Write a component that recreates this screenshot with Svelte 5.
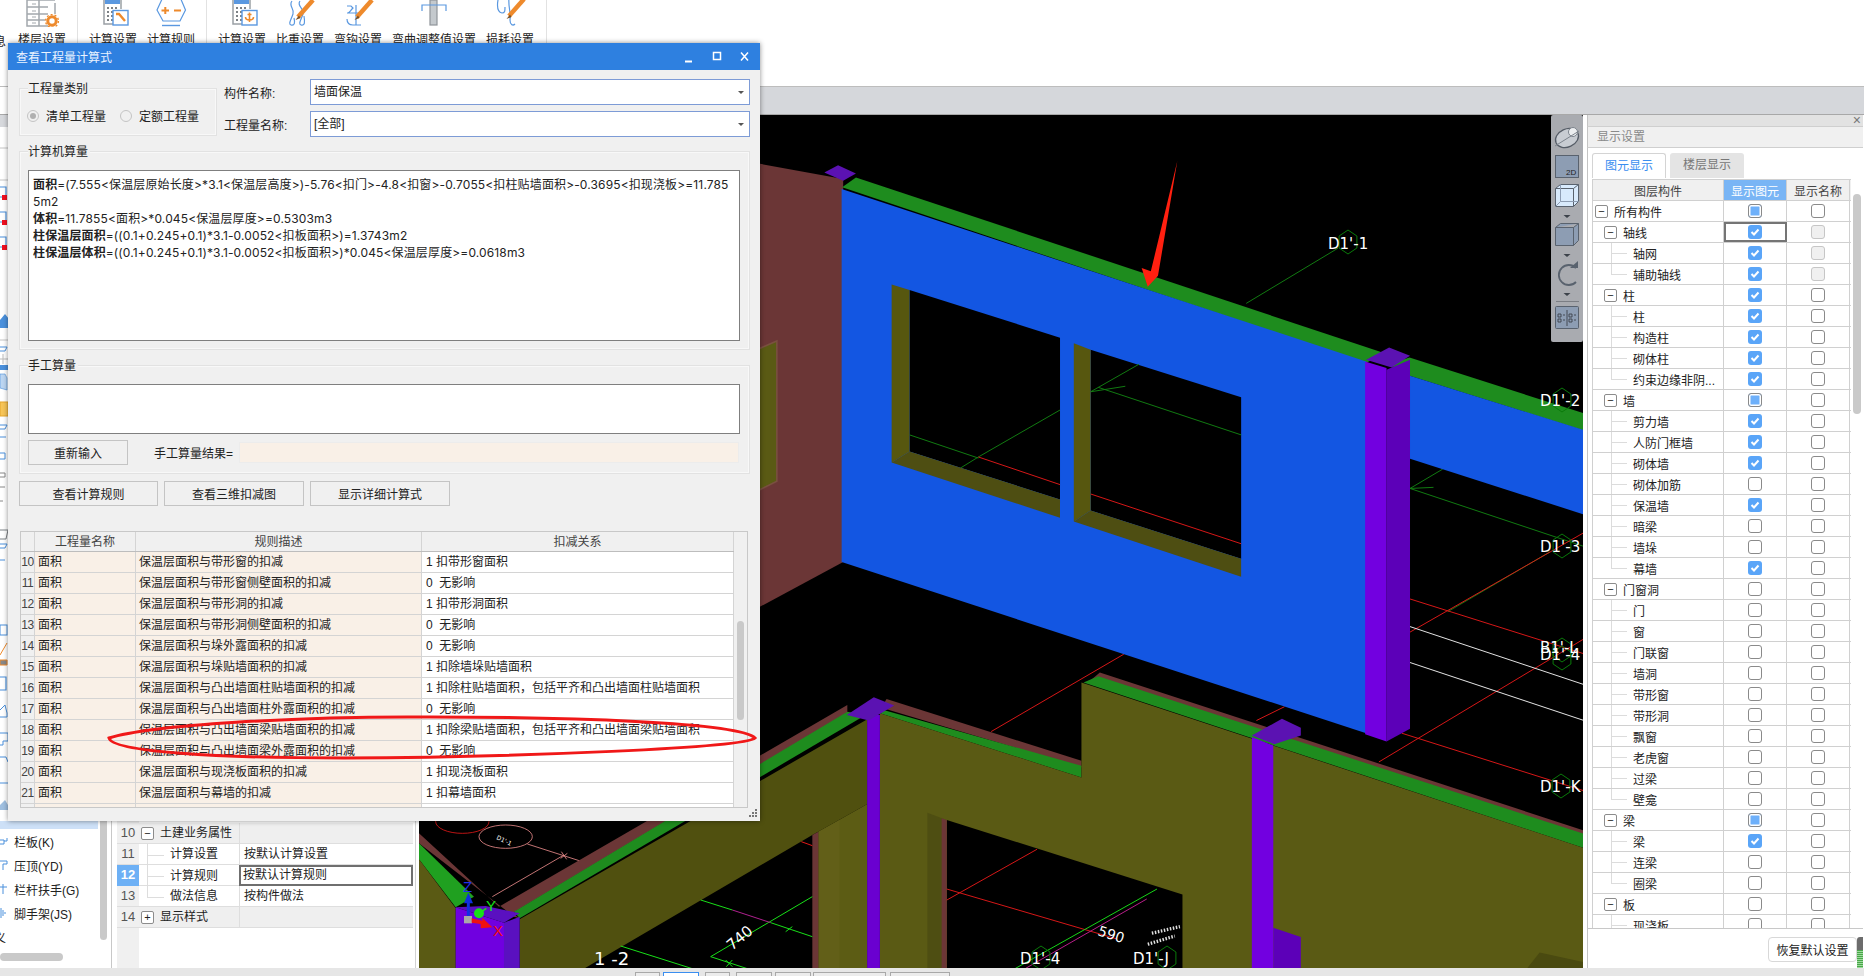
<script>
  const ribbon = [
    { items: [{ label: "楼层设置", icon: "floor" }], pad: 13, end: 6 },
    { items: [{ label: "计算设置", icon: "calcWrench" }, { label: "计算规则", icon: "hex" }], pad: 6, end: 6 },
    {
      items: [
        { label: "计算设置", icon: "calcAnchor" },
        { label: "比重设置", icon: "hooks" },
        { label: "弯钩设置", icon: "bend" },
        { label: "弯曲调整值设置", icon: "post", wide: true },
        { label: "损耗设置", icon: "loss" },
      ],
      pad: 6,
      end: 7,
    },
  ];

  const navItems = ["栏板(K)", "压顶(YD)", "栏杆扶手(G)", "脚手架(JS)"];

  const props = [
    { n: 10, name: "土建业务属性", value: "", head: "minus" },
    { n: 11, name: "计算设置", value: "按默认计算设置" },
    { n: 12, name: "计算规则", value: "按默认计算规则", active: true },
    { n: 13, name: "做法信息", value: "按构件做法", last: true },
    { n: 14, name: "显示样式", value: "", head: "plus" },
  ];

  const rules = [
    [10, "保温层面积与带形窗的扣减", "1 扣带形窗面积"],
    [11, "保温层面积与带形窗侧壁面积的扣减", "0  无影响"],
    [12, "保温层面积与带形洞的扣减", "1 扣带形洞面积"],
    [13, "保温层面积与带形洞侧壁面积的扣减", "0  无影响"],
    [14, "保温层面积与垛外露面积的扣减", "0  无影响"],
    [15, "保温层面积与垛贴墙面积的扣减", "1 扣除墙垛贴墙面积"],
    [16, "保温层面积与凸出墙面柱贴墙面积的扣减", "1 扣除柱贴墙面积，包括平齐和凸出墙面柱贴墙面积"],
    [17, "保温层面积与凸出墙面柱外露面积的扣减", "0  无影响"],
    [18, "保温层面积与凸出墙面梁贴墙面积的扣减", "1 扣除梁贴墙面积，包括平齐和凸出墙面梁贴墙面积"],
    [19, "保温层面积与凸出墙面梁外露面积的扣减", "0  无影响"],
    [20, "保温层面积与现浇板面积的扣减", "1 扣现浇板面积"],
    [21, "保温层面积与幕墙的扣减", "1 扣幕墙面积"],
    [22, "保温层面积与栏板的扣减", "1 扣栏板面积"],
  ];

  // label, level, shown state, name state
  const tree = [
    ["所有构件", 0, "p", "n"],
    ["轴线", 1, "c", "d", "sel"],
    ["轴网", 2, "c", "d"],
    ["辅助轴线", 2, "c", "d", "last"],
    ["柱", 1, "c", "n"],
    ["柱", 2, "c", "n"],
    ["构造柱", 2, "c", "n"],
    ["砌体柱", 2, "c", "n"],
    ["约束边缘非阴...", 2, "c", "n", "last"],
    ["墙", 1, "p", "n"],
    ["剪力墙", 2, "c", "n"],
    ["人防门框墙", 2, "c", "n"],
    ["砌体墙", 2, "c", "n"],
    ["砌体加筋", 2, "n", "n"],
    ["保温墙", 2, "c", "n"],
    ["暗梁", 2, "n", "n"],
    ["墙垛", 2, "n", "n"],
    ["幕墙", 2, "c", "n", "last"],
    ["门窗洞", 1, "n", "n"],
    ["门", 2, "n", "n"],
    ["窗", 2, "n", "n"],
    ["门联窗", 2, "n", "n"],
    ["墙洞", 2, "n", "n"],
    ["带形窗", 2, "n", "n"],
    ["带形洞", 2, "n", "n"],
    ["飘窗", 2, "n", "n"],
    ["老虎窗", 2, "n", "n"],
    ["过梁", 2, "n", "n"],
    ["壁龛", 2, "n", "n", "last"],
    ["梁", 1, "p", "n"],
    ["梁", 2, "c", "n"],
    ["连梁", 2, "n", "n"],
    ["圈梁", 2, "n", "n", "last"],
    ["板", 1, "n", "n"],
    ["现浇板", 2, "n", "n"],
  ];

  const statusTabs = [
    [635, 25], [663, 36, true], [705, 25], [736, 36], [775, 36], [813, 73], [890, 60],
  ];

  // pointy hexagon for the axis bubbles
  const hex = (cx, cy, r = 12) =>
    [0, 1, 2, 3, 4, 5]
      .map((i) => {
        const a = (Math.PI / 3) * i - Math.PI / 2;
        return `${(cx + r * 0.86 * Math.cos(a)).toFixed(1)},${(cy + r * Math.sin(a)).toFixed(1)}`;
      })
      .join(" ");

  const bubbles = [[1349, 242], [1563, 400], [1563, 546], [1563, 650], [1563, 658], [1562, 786], [1042, 958], [1168, 958]];
</script>

<div class="app">
  <header class="ribbon">
    <span class="cut-label">息</span>
    {#each ribbon as group}
      <div class="rgroup" style="padding-left:{group.pad}px;padding-right:{group.end}px">
        {#each group.items as item}
          <div class="ritem" class:wide={item.wide}>
            <svg class="ricon" viewBox="0 0 48 27" width="48" height="27" fill="none">
              {#if item.icon === "floor"}
                <path d="M9 0V26H30M37 3V14M9 0H37M9 7H30M9 14H30M9 20H27M21 0V26" stroke="#a3a8ad" stroke-width="1.5" />
                <path d="M14 4H18M14 11H18M14 17H18M14 23H18" stroke="#a3a8ad" />
                <circle cx="34" cy="21" r="4.2" stroke="#ee8a2c" stroke-width="3" />
                <circle cx="34" cy="21" r="6.4" stroke="#ee8a2c" stroke-dasharray="2 2" stroke-width="1.4" />
              {:else if item.icon === "calcWrench" || item.icon === "calcAnchor"}
                <path d="M15 0V24H24" stroke="#9aa0a5" stroke-width="1.5" />
                <path d="M32 0V9" stroke="#9aa0a5" stroke-width="1.5" />
                <rect x="16" y="0" width="15" height="4" fill="#5a98e0" />
                <path d="M18 8H20M22 8H24M26 8H28M18 12H20M22 12H24M18 16H20M22 16H24M18 20H20M22 20H24" stroke="#7d8286" stroke-width="2" />
                <rect x="24" y="10.5" width="15" height="14.5" fill="#fff" stroke="#5a98e0" stroke-width="1.4" />
                {#if item.icon === "calcWrench"}
                  <path d="M27 14L30 14L36 21" stroke="#ee8a2c" stroke-width="2.4" />
                {:else}
                  <path d="M31.500 12.500V22M27.500 17C27.500 21 35.500 21 35.500 17M29.500 14.500H33.500" stroke="#ee8a2c" stroke-width="1.6" />
                {/if}
              {:else if item.icon === "hex"}
                <path d="M16 -3L10 10L16 21H33L38.500 10L33 -3" stroke="#5a98e0" stroke-width="1.2" />
                <path d="M15 25.500H33" stroke="#5a98e0" stroke-width="1.4" />
                <path d="M14.500 10.500H22M18.300 7V14M27 10.500H34" stroke="#ee8a2c" stroke-width="2" />
              {:else if item.icon === "hooks"}
                <path d="M16 1C12 6 19 9 17 14C15 20 12 24 15 25C19 26 19 22 18 18M24 1C20 6 29 9 27 14C25 20 22 24 25 25C29 26 29 22 28 16" stroke="#5a98e0" stroke-width="1.2" />
                <path d="M22 17L37 0" stroke="#ee8a2c" stroke-width="4.500" />
                <path d="M23 15.500L19.500 20L24.500 18Z" fill="#7a5024" />
              {:else if item.icon === "bend"}
                <path d="M13 6H17L19 8C16 11 16 12 14 13M13 13H27M13 19C13 24 16 25 19 25H27M22 5V25" stroke="#5a98e0" stroke-width="1.2" />
                <path d="M23 17L38 0" stroke="#ee8a2c" stroke-width="4.500" />
                <path d="M24 15.500L20.500 20L25.500 18Z" fill="#7a5024" />
              {:else if item.icon === "post"}
                <rect x="20" y="0" width="7" height="25" fill="#c4c9cd" stroke="#8f9499" stroke-width="1.2" />
                <path d="M12 11V5H36V11" stroke="#5a98e0" stroke-width="1.2" />
              {:else if item.icon === "loss"}
                <path d="M12 0C11 6 11 12 16 13C19 13 19 11 19 7M23 -2C22 6 25 12 24 20C24 25 27 26 29 24" stroke="#5a98e0" stroke-width="1.2" />
                <path d="M23 16L38 -1" stroke="#ee8a2c" stroke-width="4.500" />
                <path d="M24 14.500L20.500 19L25.500 17Z" fill="#7a5024" />
              {/if}
            </svg>
            <span>{item.label}</span>
          </div>
        {/each}
      </div>
    {/each}
  </header>

  <div class="band"><div class="band-left"></div></div>

  <div class="main">
    <aside class="nav">
      <svg class="edge" width="9" height="706" viewBox="0 0 9 706" fill="none">
        <rect width="9" height="12" fill="#d6d8dc" />
        <path d="M0 33H9M0 65H9M0 225H9" stroke="#c4c4c4" />
        {#each [80, 105, 130] as y}
          <path d="M0 {y - 8}H6V{y + 2}H0" stroke="#4a90dc" stroke-width="1.200" />
          <rect x="2" y={y} width="5" height="5" fill="#f01020" />
        {/each}
        <path d="M0 205L5 199L9 204V213H0Z" fill="#4a90dc" />
        <path d="M0 232H7L5 236H0" stroke="#4a90dc" />
        <rect y="250" width="9" height="5" fill="#4a90dc" />
        <path d="M0 244H9M3 239V249" stroke="#bbb" />
        <path d="M0 259H5L7 263V275L0 273Z" fill="#bcd6f2" stroke="#4a90dc" stroke-width=".6" />
        <rect y="287" width="8" height="14" fill="#f7c558" stroke="#e5a62c" />
        <path d="M0 310H7L5 314H0M0 322H6M0 338H5V344H0" stroke="#4a90dc" />
        <path d="M0 358H5V362H0M0 372H5M0 386H3" stroke="#888" />
        <path d="M0 415H8L6 424H0" stroke="#7d8286" />
        <path d="M0 429H7L5 433H0M0 445H5" stroke="#4a90dc" />
        <rect y="510" width="7" height="10" stroke="#4a90dc" />
        <path d="M0 540L7 528M0 545H7V550H0Z" fill="#888" stroke="#ee8a2c" />
        <path d="M0 562H6V575H0" stroke="#4a90dc" stroke-width="1.200" />
        <path d="M0 595L5 590L7 598V602H0" stroke="#4a90dc" />
        <path d="M0 618H8V626H3V630H0" stroke="#4a90dc" />
        <path d="M0 642H6L8 647M0 668H8" stroke="#4a90dc" />
        <path d="M0 690L5 685L8 690V695H0Z" fill="#9fbfe0" />
      </svg>
      <div class="nav-active"></div>
      {#each navItems as label, i}
        <div class="nav-row">
          <svg width="8" height="12" viewBox="0 0 8 12" fill="none" stroke="#4a90dc">
            {#if i === 0}<path d="M0 5H4V9H0M4 6H7V3" />{/if}
            {#if i === 1}<path d="M0 2H7V5H3V11" />{/if}
            {#if i === 2}<path d="M0 4H7M3 1V11" />{/if}
            {#if i === 3}<path d="M1 1V11M3 3V9M5 5V7" />{/if}
          </svg>
          <span>{label}</span>
        </div>
      {/each}
      <div class="nav-row tail"><span>义</span></div>
      <div class="nav-vscroll"></div>
      <div class="nav-hscroll"></div>
    </aside>

    <section class="props">
      {#each props as row}
        <div class="prop" class:active={row.active} class:head={row.head}>
          <div class="num">{row.n}</div>
          <div class="pname">
            {#if row.head}
              <span class="box">{row.head === "minus" ? "−" : "+"}</span>
            {:else}
              <span class="pline" class:end={row.last}></span>
            {/if}
            <span>{row.name}</span>
          </div>
          <div class="pvalue">{row.value}</div>
        </div>
      {/each}
    </section>

    <div class="canvas">
      <svg class="scene" width="1164" height="853" viewBox="420 115 1164 853">
        <rect x="420" y="115" width="1164" height="853" fill="#000" />

        <!-- lower left beam, traced in a 3x crop -->
        <g transform="translate(400,700) scale(.33333)">
          <ellipse cx="190" cy="365" rx="80" ry="35" fill="none" stroke="#e01818" stroke-width="2.500" />
          <ellipse cx="320" cy="410" rx="80" ry="35" fill="#000" stroke="#e88a8a" stroke-width="2.500" />
          <path d="M385 432L550 485M280 590L495 465" stroke="#e88a8a" stroke-width="2.500" />
          <path d="M487 455L503 478M485 475L505 460" stroke="#e88a8a" stroke-width="2.500" />
          <path d="M60 400L300 620L1345 15V38L340 640L362 655L345 650L60 430Z" fill="#6b3636" />
          <path d="M60 430L225 590L170 622L60 478Z" fill="#20a020" />
          <path d="M60 478L170 625V806H60Z" fill="#5a5a14" />
          <path d="M345 635L1345 35L1400 45L362 655Z" fill="#1e8c1e" />
          <path d="M362 658L1405 58V312L1320 360L1240 405L555 806H362Z" fill="#50500f" />
          <path d="M1258 395L1320 360L1405 312V806H1258Z" fill="#5c5c14" />
          <path d="M1258 395L1322 360V806H1258Z" fill="#625f18" />
          <path d="M1240 405L1258 395V806H1240Z" fill="#6b3636" />
          <path d="M170 622L260 618L362 640L315 668Z" fill="#5a10c0" />
          <path d="M170 622L315 668V806H170Z" fill="#7000e0" />
          <path d="M315 668L362 650V806H315Z" fill="#5a10c0" />
          <path d="M665 738L880 806M935 770L1240 590M905 600L1000 630M1115 668L1240 710M935 770L1045 806" stroke="#18e018" stroke-width="3" />
          <path d="M1000 630L1115 668" stroke="#b02090" stroke-width="3" />
          <path d="M1160 695L1180 680M980 780L1000 800M1000 780L982 800" stroke="#18e018" stroke-width="3" />
          <path d="M1207 425L1240 437" stroke="#e01818" stroke-width="3" />
          <path d="M208 650V600" stroke="#1030e0" stroke-width="9" />
          <path d="M208 578L195 610H222Z" fill="#1030e0" />
          <circle cx="240" cy="640" r="15" fill="#18e018" />
          <path d="M262 625L240 640" stroke="#18e018" stroke-width="5" />
          <rect x="195" y="648" width="24" height="22" fill="#a9a9a9" />
          <path d="M218 655L250 662L250 653L280 682L245 685L245 672L218 668Z" fill="#f01010" />
        </g>
        <text class="axis" x="464" y="892" fill="#2030f0">Z</text>
        <text class="axis" x="487" y="911" fill="#18e018">Y</text>
        <text class="axis" x="494" y="936" fill="#f01010">X</text>
        <text class="label lg" x="595" y="965">1 -2</text>
        <text class="label" transform="translate(733,951) rotate(-40)">740</text>
        <text class="label xs" transform="translate(497,839) rotate(25)">D1'-1</text>

        <!-- upper walls, traced in a 1.96 x 1.81 crop -->
        <g transform="translate(760,110) scale(.5102,.5525)">
          <path d="M955 350L1135 250M1276 685L1630 794M1276 685L1340 650M1276 685L1322 683M1350 908L1550 800" stroke="#128012" stroke-width="1.800" fill="none" />
          <path d="M1276 885L1630 988M1276 945L1630 758M1215 1180L1630 950M1260 1128L1630 1236M975 1105L1030 1080M455 1125L715 985" stroke="#e01818" stroke-width="1.800" fill="none" />
          <path d="M1276 935L1630 1044M1276 1000L1630 1109" stroke="#eee" stroke-width="1.800" />

          <path d="M0 97L165 125V818L0 900Z" fill="#6b3636" />
          <path d="M0 432L35 418V672L0 688Z" fill="#5a5a14" stroke="#7a5040" stroke-width="3" />
          <path d="M128 113L155 100L190 115L165 128Z" fill="#5b12b2" />
          <path d="M163 140L190 122L1225 440L1190 458Z" fill="#1e8c1e" />
          <path d="M162 143L1190 455V1128L162 818Z" fill="#1356e2" />

          <!-- window openings -->
          <path d="M295 326L590 412V705L295 618Z" fill="#000" />
          <path d="M650 434L945 520V812L650 725Z" fill="#000" />
          <path d="M295 588L430 630M395 648L430 628L590 543M650 510L745 460M665 502L945 588M650 510L718 500" stroke="#128012" stroke-width="1.800" fill="none" />
          <path d="M430 628L590 678M650 695L945 785" stroke="#e01818" stroke-width="1.800" fill="none" />
          <path d="M260 316L295 326V618L260 638Z" fill="#57570f" />
          <path d="M260 638L295 618L590 705V738Z" fill="#4e4e12" />
          <path d="M617 422L650 434V725L617 745Z" fill="#57570f" />
          <path d="M617 745L650 725L945 812V845Z" fill="#4e4e12" />

          <path d="M1250 455L1275 448L1630 553V584L1238 470Z" fill="#1e8c1e" />
          <path d="M1238 470L1630 583V736L1238 620Z" fill="#1356e2" />
          <path d="M1230 470L1276 452V1120L1230 1143Z" fill="#5c00b8" />
          <path d="M1188 455L1230 467V1143L1188 1130Z" fill="#7200e0" />
          <path d="M1190 452L1235 430L1276 445L1240 466Z" fill="#5b12b2" />

          <path d="M820 92L782 300L762 320L750 286L768 292Z" fill="#ff2010" />

          <path d="M250 1066L632 1178V1190L240 1082Z" fill="#6b3636" />
          <path d="M668 1018L1630 1308V1318L650 1032Z" fill="#6b3636" />
          <path d="M237 1084L632 1187V1208L237 1092Z" fill="#1e8c1e" />
          <path d="M636 1036L665 1025L1630 1314V1340Z" fill="#1e8c1e" />
          <path d="M237 1092L632 1208V1036L1630 1340V1560H237Z" fill="#5a5a14" />
          <path d="M368 1285L830 1420V1560H368Z" fill="#000" />
          <path d="M330 1272L368 1285V1560H330Z" fill="#4e4e12" />
          <path d="M358 1282L368 1285V1560H358Z" fill="#6b3636" />
          <path d="M368 1410L700 1500M368 1430L545 1338" stroke="#e01818" stroke-width="1.800" fill="none" />
          <path d="M500 1555L780 1410" stroke="#18e018" stroke-width="1.800" />
          <path d="M520 1555L760 1428" stroke="#c02090" stroke-width="1.800" />
          <path d="M770 1490L825 1478M762 1510L815 1495" stroke="#ddd" stroke-width="6" stroke-dasharray="3 3" />

          <path d="M212 1095L237 1095V1560H212Z" fill="#6a00d0" />
          <path d="M172 1095L225 1063L265 1078L215 1105Z" fill="#5b12b2" />
          <path d="M1008 1480L1062 1497V1560H1008Z" fill="#5c00b8" />
          <path d="M966 1135L1008 1150V1560H966Z" fill="#7200e0" />
          <path d="M966 1132L1025 1102L1062 1118V1132L1010 1148Z" fill="#5b12b2" />
          <path d="M1500 1560L1530 1525L1630 1545V1560Z" fill="#4a4a10" />
        </g>

        {#each bubbles as [cx, cy]}
          <polygon points={hex(cx, cy)} fill="none" stroke="#0a7a0a" />
        {/each}
        <text class="label" x="1329" y="249">D1'-1</text>
        <text class="label" x="1541" y="406">D1'-2</text>
        <text class="label" x="1541" y="552">D1'-3</text>
        <text class="label" x="1541" y="653">B1'-L</text>
        <text class="label" x="1541" y="660">D1'-4</text>
        <text class="label" x="1541" y="792">D1'-K</text>
        <text class="label" x="1021" y="964">D1'-4</text>
        <text class="label" x="1134" y="964">D1'-J</text>
        <text class="label md" transform="translate(1098,935) rotate(18)">590</text>
      </svg>

      <div class="vtools">
        <svg width="32" height="227" viewBox="0 0 32 227" fill="none">
          <ellipse cx="16" cy="23" rx="12" ry="9" fill="#c8ccd2" stroke="#555c66" stroke-width="1.200" transform="rotate(-25 16 23)" />
          <circle cx="22" cy="17" r="4.500" fill="#eceef0" stroke="#7c838c" />
          <path d="M4 31L28 16" stroke="#7c838c" />
          <rect x="4.500" y="40.500" width="23" height="22" fill="#8d9db3" stroke="#59626e" />
          <text x="15" y="60" font-size="8" fill="#222" font-family="Liberation Sans, sans-serif">2D</text>
          <path d="M4.500 73.500H22.500V91.500H4.500ZM4.500 73.500L9.500 69.500H27.500V86.500L22.500 91.500M22.500 73.500L27.500 69.500" fill="#d8eafc" stroke="#59626e" />
          <path d="M9.500 69.500V86.500H27.500M9.500 86.500L4.500 91.500" stroke="#8d9db3" />
          <path d="M12.500 100L16 103L19.500 100Z" fill="#3c424a" />
          <path d="M4.500 112.500H22.500V130.500H4.500ZM4.500 112.500L9.500 108.500H27.500V125.500L22.500 130.500V112.500L27.500 108.500" fill="#8d9db3" stroke="#59626e" />
          <path d="M12.500 139L16 142L19.500 139Z" fill="#3c424a" />
          <path d="M25 153A10 10 0 1 0 25 167" stroke="#59626e" stroke-width="1.800" />
          <path d="M19 153H27V146Z" fill="#59626e" />
          <path d="M12.500 178L16 181L19.500 178Z" fill="#3c424a" />
          <path d="M5 186.500H28" stroke="#7b7e84" />
          <rect x="4.500" y="191.500" width="23" height="22" rx="1" fill="#8d9db3" stroke="#59626e" />
          <path d="M16 195V211M7 199H10V202H7ZM7 204H10V207H7ZM18 199H21V202H18ZM18 204H21V207H18ZM12 200H14M12 205H14M23 200H25M23 205H25" stroke="#3c424a" stroke-width=".9" />
        </svg>
      </div>
    </div>

    <aside class="display">
      <div class="dstrip"><span>×</span></div>
      <div class="dtitle">显示设置</div>
      <div class="tabs">
        <div class="tab on">图元显示</div>
        <div class="tab">楼层显示</div>
      </div>
      <div class="dbody">
        <div class="dtable">
          <div class="drow dhead">
            <div class="dc name">图层构件</div>
            <div class="dc hl">显示图元</div>
            <div class="dc">显示名称</div>
          </div>
          {#each tree as [label, level, shown, nameState, flag]}
            <div class="drow">
              <div class="dc name tree lv{level}" class:last={flag === "last"}>
                {#if level < 2}<span class="box">−</span>{/if}
                <span class="tlabel">{label}</span>
              </div>
              <div class="dc" class:sel={flag === "sel"}>
                <span class="chk {shown}">
                  {#if shown === "c"}
                    <svg width="12" height="12" viewBox="0 0 12 12" fill="none"><path d="M2.500 6L5 8.500L9.500 3.500" stroke="#fff" stroke-width="2" /></svg>
                  {/if}
                </span>
              </div>
              <div class="dc"><span class="chk {nameState}"></span></div>
            </div>
          {/each}
        </div>
        <div class="dscroll"></div>
      </div>
      <div class="dfoot">
        <button class="restore">恢复默认设置</button>
        <div class="meter"></div>
      </div>
    </aside>
  </div>

  <footer class="status">
    {#each statusTabs as [x, w, on], i}
      <span class="stab" class:on style="margin-left:{i ? x - statusTabs[i - 1][0] - statusTabs[i - 1][1] : x}px;width:{w}px"></span>
    {/each}
  </footer>

  <div class="dialog">
    <div class="titlebar">
      <span>查看工程量计算式</span>
      <svg width="70" height="14" viewBox="0 0 70 14" fill="none" stroke="#fff">
        <path d="M2 11.500H9" stroke-width="2" />
        <rect x="30.500" y="2.500" width="7" height="7" stroke-width="1.500" />
        <path d="M58 2.500L65 10.500M65 2.500L58 10.500" stroke-width="1.500" />
      </svg>
    </div>

    <div class="dlg-body">
      <div class="toprow">
        <div class="group kind">
          <span class="legend">工程量类别</span>
          <div class="radios">
            <label><span class="radio on"></span>清单工程量</label>
            <label><span class="radio"></span>定额工程量</label>
          </div>
        </div>
        <div class="fields">
          <div class="field">
            <span>构件名称:</span>
            <div class="combo">墙面保温<i></i></div>
          </div>
          <div class="field">
            <span>工程量名称:</span>
            <div class="combo">[全部]<i></i></div>
          </div>
        </div>
      </div>

      <div class="group calc">
        <span class="legend">计算机算量</span>
        <div class="textbox big">
          <b>面积</b>=(7.555&lt;保温层原始长度&gt;*3.1&lt;保温层高度&gt;)-5.76&lt;扣门&gt;-4.8&lt;扣窗&gt;-0.7055&lt;扣柱贴墙面积&gt;-0.3695&lt;扣现浇板&gt;=11.785<br />5m2<br />
          <b>体积</b>=11.7855&lt;面积&gt;*0.045&lt;保温层厚度&gt;=0.5303m3<br />
          <b>柱保温层面积</b>=((0.1+0.245+0.1)*3.1-0.0052&lt;扣板面积&gt;)=1.3743m2<br />
          <b>柱保温层体积</b>=((0.1+0.245+0.1)*3.1-0.0052&lt;扣板面积&gt;)*0.045&lt;保温层厚度&gt;=0.0618m3
        </div>
      </div>

      <div class="group manual">
        <span class="legend">手工算量</span>
        <div class="textbox small"></div>
        <div class="manual-row">
          <button class="reset">重新输入</button>
          <span class="rlabel">手工算量结果=</span>
          <div class="result"></div>
        </div>
      </div>

      <div class="actions">
        <button class="a1">查看计算规则</button>
        <button class="a2">查看三维扣减图</button>
        <button class="a2">显示详细计算式</button>
      </div>

      <div class="rules">
        <div class="rhead">
          <div class="rc"></div>
          <div class="rc center">工程量名称</div>
          <div class="rc center">规则描述</div>
          <div class="rc center">扣减关系</div>
        </div>
        <div class="rlist">
          {#each rules as [n, rule, rel]}
            <div class="rrow">
              <div class="rc idx">{n}</div>
              <div class="rc tint">面积</div>
              <div class="rc tint">{rule}</div>
              <div class="rc rel">{rel}</div>
            </div>
          {/each}
        </div>
        <div class="rscroll"></div>
      </div>
    </div>

    <svg class="grip" width="10" height="10" viewBox="0 0 10 10" fill="#777">
      <rect x="7" y="1" width="2" height="2" /><rect x="4" y="4" width="2" height="2" /><rect x="7" y="4" width="2" height="2" />
      <rect x="1" y="7" width="2" height="2" /><rect x="4" y="7" width="2" height="2" /><rect x="7" y="7" width="2" height="2" />
    </svg>
  </div>

  <svg class="ring" width="680" height="60" viewBox="100 710 680 60" fill="none">
    <path d="M109 738C150 725 300 716 430 717C560 717 740 722 755 738C745 748 520 757 344 758C220 758 112 752 109 738Z" stroke="#f01818" stroke-width="3" />
  </svg>
</div>

<style>
  :global(body) {
    margin: 0;
    background: #fff;
  }

  .app {
    position: relative;
    display: flex;
    flex-direction: column;
    width: 1864px;
    height: 976px;
    overflow: hidden;
    font-family: "Liberation Sans", "Noto Sans CJK SC", sans-serif;
    font-size: 12px;
    color: #222;
  }

  .ribbon {
    position: relative;
    display: flex;
    flex: 0 0 87px;
    align-items: flex-start;
    background: #fff;
    border-bottom: 1px solid #bdbdbd;
    box-sizing: border-box;
  }

  .cut-label {
    position: absolute;
    top: 32px;
    left: -6px;
  }

  .rgroup {
    display: flex;
    height: 46px;
    border-right: 1px solid #e2e2e2;
  }

  .rgroup:last-child {
    border-right: 1px solid #e2e2e2;
  }

  .ritem {
    display: flex;
    flex-direction: column;
    align-items: center;
    width: 58px;
    height: 46px;
  }

  .ritem.wide {
    width: 94px;
  }

  .ricon {
    display: block;
    flex: 0 0 27px;
  }

  .ritem span {
    margin-top: 4px;
    line-height: 18px;
    white-space: nowrap;
  }

  .band {
    display: flex;
    flex: 0 0 28px;
    background: #d5d7db;
    border-bottom: 1px solid #a8a8a8;
    box-sizing: border-box;
  }

  .band-left {
    width: 9px;
    background: #fff;
  }

  .main {
    display: flex;
    flex: 0 0 853px;
    min-height: 0;
  }

  /* left list */
  .nav {
    position: relative;
    flex: 0 0 112px;
    box-sizing: border-box;
    border-right: 1px solid #c8c8c8;
    background: #fff;
  }

  .edge {
    display: block;
  }

  .nav-active {
    width: 98px;
    height: 8px;
    background: #cde0f7;
  }

  .nav-row {
    display: flex;
    gap: 6px;
    align-items: center;
    height: 24px;
    font-size: 12px;
    white-space: nowrap;
  }

  .nav-row.tail {
    padding-left: 0;
  }

  .nav-row.tail span {
    margin-left: -6px;
  }

  .nav-vscroll {
    position: absolute;
    top: 600px;
    right: 4px;
    width: 7px;
    height: 225px;
    border-radius: 4px;
    background: #c9c9c9;
  }

  .nav-hscroll {
    position: absolute;
    bottom: 7px;
    left: 0;
    width: 63px;
    height: 8px;
    border-radius: 4px;
    background: #c9c9c9;
  }

  /* property grid */
  .props {
    flex: 0 0 299px;
    box-sizing: border-box;
    margin-left: 5px;
    padding-top: 708px;
    border-right: 1px solid #d2d2d2;
    background: linear-gradient(to right, #f0f0f0 22px, #fff 22px);
  }

  .prop {
    display: grid;
    grid-template-columns: 22px 100px 1fr;
    height: 21px;
    margin-right: 2px;
    border-bottom: 1px solid #dedede;
    box-sizing: border-box;
    line-height: 20px;
  }

  .num {
    text-align: center;
    color: #555;
    font-size: 13px;
  }

  .prop.active .num {
    background: #6db0f5;
    color: #fff;
    font-weight: bold;
  }

  .pname {
    display: flex;
    align-items: center;
    padding-left: 31px;
    position: relative;
    white-space: nowrap;
  }

  .prop.head .pname {
    gap: 6px;
    padding-left: 2px;
  }

  .prop.head .pname,
  .prop.head .pvalue {
    background: #efefef;
  }

  .pline {
    position: absolute;
    left: 8px;
    top: 0;
    width: 16px;
    height: 11px;
    border-left: 1px solid #ddd;
    border-bottom: 1px solid #ddd;
  }

  .pline:not(.end)::after {
    content: "";
    position: absolute;
    left: -1px;
    top: 11px;
    height: 10px;
    border-left: 1px solid #ddd;
  }

  .pvalue {
    box-sizing: border-box;
    padding-left: 4px;
    border-left: 1px solid #dedede;
  }

  .prop.active .pvalue {
    padding-left: 2px;
    border: 2px solid #6f6f6f;
    line-height: 17px;
  }

  .box {
    display: inline-flex;
    flex: 0 0 auto;
    align-items: center;
    justify-content: center;
    box-sizing: border-box;
    width: 13px;
    height: 13px;
    border: 1px solid #8c8c8c;
    border-radius: 2px;
    background: #fff;
    font-size: 11px;
    line-height: 1;
  }

  /* 3D view */
  .canvas {
    position: relative;
    flex: 0 0 1164px;
    margin-left: 3px;
    height: 853px;
    overflow: hidden;
    background: #000;
  }

  .scene {
    display: block;
  }

  .label {
    fill: #fff;
    font-family: "DejaVu Sans", sans-serif;
    font-size: 15px;
  }

  .label.xs {
    font-size: 6px;
  }

  .label.md {
    font-size: 14px;
  }

  .label.lg {
    font-size: 18px;
  }

  .axis {
    font-family: "Liberation Sans", sans-serif;
    font-size: 15px;
  }

  .vtools {
    position: absolute;
    top: 0;
    right: 0;
    width: 32px;
    height: 227px;
    border-radius: 2px;
    background: #a9abb0;
  }

  /* display settings */
  .display {
    display: flex;
    flex: 0 0 280px;
    flex-direction: column;
    box-sizing: border-box;
    height: 853px;
    padding-left: 4px;
    background: #fff;
  }

  .dstrip {
    flex: 0 0 12px;
    box-sizing: border-box;
    min-height: 0;
    overflow: hidden;
    padding-right: 2px;
    border-left: 1px solid #c4c4c4;
    border-bottom: 1px solid #cfcfcf;
    background: #e2e2e2;
    color: #777;
    font-size: 14px;
    line-height: 11px;
    text-align: right;
  }

  .dtitle {
    flex: 0 0 21px;
    box-sizing: border-box;
    min-height: 0;
    overflow: hidden;
    padding-left: 9px;
    border-left: 1px solid #c4c4c4;
    border-bottom: 1px solid #cfcfcf;
    background: #f0f0f0;
    color: #8a8a8a;
    line-height: 21px;
  }

  .tabs {
    display: flex;
    flex: 0 0 31px;
    gap: 4px;
    align-items: flex-end;
    box-sizing: border-box;
    padding: 0 0 1px 4px;
    border-left: 1px solid #c4c4c4;
  }

  .tab {
    box-sizing: border-box;
    width: 74px;
    height: 25px;
    border-radius: 3px 3px 0 0;
    background: #e4e4e4;
    color: #777;
    line-height: 25px;
    text-align: center;
  }

  .tab.on {
    border: 1px solid #d4d4d4;
    border-bottom: 0;
    background: #fff;
    color: #3a8ef0;
  }

  .dbody {
    position: relative;
    flex: 0 0 750px;
    overflow: hidden;
    box-sizing: border-box;
    padding-left: 4px;
    border-left: 1px solid #c4c4c4;
    border-bottom: 1px solid #c8c8c8;
  }

  .dtable {
    width: 258px;
    border-left: 1px solid #d0d0d0;
    border-top: 1px solid #d0d0d0;
  }

  .drow {
    display: grid;
    grid-template-columns: 131px 63px 63px;
    height: 21px;
    box-sizing: border-box;
    border-bottom: 1px solid #d0d0d0;
  }

  .dc {
    display: flex;
    align-items: center;
    justify-content: center;
    box-sizing: border-box;
    border-right: 1px solid #d0d0d0;
    white-space: nowrap;
  }

  .dhead {
    background: #f0f0f0;
    color: #444;
  }

  .dhead .hl {
    background: #79b5f5;
    color: #fff;
  }

  .tree {
    position: relative;
    justify-content: flex-start;
  }

  .lv0 {
    padding-left: 2px;
  }

  .lv1 {
    padding-left: 11px;
  }

  .lv2 {
    padding-left: 40px;
  }

  .tree .box {
    margin-right: 6px;
  }

  .lv2::before {
    content: "";
    position: absolute;
    left: 18px;
    top: 0;
    bottom: 0;
    border-left: 1px solid #dcdcdc;
  }

  .lv2.last::before {
    bottom: 10px;
  }

  .lv2::after {
    content: "";
    position: absolute;
    left: 18px;
    top: 10px;
    width: 16px;
    border-top: 1px solid #dcdcdc;
  }

  .sel {
    outline: 2px solid #757575;
    outline-offset: -2px;
  }

  .chk {
    display: inline-flex;
    align-items: center;
    justify-content: center;
    box-sizing: border-box;
    width: 14px;
    height: 14px;
    border: 1px solid #8a8a8a;
    border-radius: 3px;
    background: #fff;
  }

  .chk.c {
    border: 0;
    background: #5aa5f8;
  }

  .chk.p {
    background: #6eb0fa;
    box-shadow: inset 0 0 0 1.500px #fff;
  }

  .chk.d {
    border-color: #c6c6c6;
    background: #f0f0f0;
  }

  .dscroll {
    position: absolute;
    top: 15px;
    left: 265px;
    width: 8px;
    height: 220px;
    border-radius: 4px;
    background: #c9c9c9;
  }

  .dfoot {
    display: flex;
    flex: 1;
    justify-content: flex-end;
    padding-top: 8px;
    border-left: 1px solid #c4c4c4;
  }

  button {
    padding: 0;
    font: inherit;
    color: #222;
  }

  .restore {
    width: 89px;
    height: 25px;
    border: 1px solid #d8d8d8;
    border-radius: 4px;
    background: #fff;
  }

  .meter {
    width: 6px;
    height: 39px;
    margin-left: 0;
    background: repeating-linear-gradient(to bottom, #48a848 0 1px, #9ed89e 1px 2px);
    border-top: 13px solid #6c6c6c;
    box-sizing: border-box;
    border-radius: 3px 0 0 0;
  }

  .status {
    display: flex;
    flex: 0 0 8px;
    align-items: flex-start;
    background: #e6e6e6;
    overflow: hidden;
  }

  .stab {
    flex: 0 0 auto;
    box-sizing: border-box;
    height: 8px;
    margin-top: 4px;
    border: 1px solid #a8a8a8;
    background: #ececec;
  }

  .stab.on {
    border-color: #3a8ef0;
    background: #fff;
  }

  /* dialog */
  .dialog {
    position: absolute;
    top: 43px;
    left: 8px;
    display: flex;
    flex-direction: column;
    box-sizing: border-box;
    width: 752px;
    height: 778px;
    background: #f0f0f0;
    box-shadow: 0 0 5px rgb(0 0 0 / 45%);
  }

  .titlebar {
    display: flex;
    flex: 0 0 27px;
    align-items: center;
    justify-content: space-between;
    padding: 0 7px 0 8px;
    background: #2e80e0;
    color: #eaf3ff;
  }

  .dlg-body {
    padding: 9px 10px 0 11px;
  }

  .toprow {
    display: flex;
    height: 58px;
  }

  .group {
    box-sizing: border-box;
    padding: 0 9px 0 8px;
    border: 1px solid #e2e2e2;
    box-shadow: inset 0 0 0 1px #f8f8f8;
  }

  .legend {
    display: block;
    width: fit-content;
    margin-top: -8px;
    padding-right: 2px;
    background: #f0f0f0;
    line-height: 17px;
  }

  .kind {
    flex: 0 0 198px;
    height: 48px;
    margin-top: 9px;
  }

  .radios {
    display: flex;
    gap: 14px;
    margin-top: 9px;
    margin-left: -1px;
  }

  .radios label {
    display: flex;
    gap: 7px;
    align-items: center;
    white-space: nowrap;
  }

  .radio {
    position: relative;
    box-sizing: border-box;
    width: 12px;
    height: 12px;
    border: 1px solid #c4c4c4;
    border-radius: 50%;
    background: #f0f0f0;
  }

  .radio.on::after {
    content: "";
    position: absolute;
    inset: 2px;
    border-radius: 50%;
    background: #b0b0b0;
  }

  .fields {
    display: flex;
    flex: 1;
    flex-direction: column;
    gap: 6px;
    margin-left: 7px;
  }

  .field {
    display: flex;
    align-items: center;
    height: 26px;
  }

  .field > span {
    flex: 0 0 86px;
  }

  .combo {
    position: relative;
    flex: 1;
    box-sizing: border-box;
    height: 26px;
    padding-left: 3px;
    border: 1px solid #7d9bd6;
    background: #fff;
    line-height: 24px;
  }

  .combo i {
    position: absolute;
    top: 11px;
    right: 5px;
    border: 3px solid transparent;
    border-top: 3px solid #555;
  }

  .calc {
    height: 199px;
    margin-top: 14px;
  }

  .manual {
    height: 109px;
    margin-top: 15px;
  }

  .textbox {
    box-sizing: border-box;
    width: 712px;
    background: #fff;
    border: 1px solid #7f7f7f;
  }

  .big {
    height: 171px;
    margin-top: 9px;
    padding: 5px 4px;
    font-family: Inter, "Noto Sans CJK SC", sans-serif;
    letter-spacing: 0.13px;
    line-height: 17px;
    white-space: nowrap;
  }

  .small {
    height: 50px;
    margin-top: 9px;
  }

  .manual-row {
    display: flex;
    align-items: center;
    height: 25px;
    margin-top: 6px;
  }

  .reset {
    width: 100px;
    height: 25px;
    border: 1px solid #c4c4c4;
    background: #f0f0f0;
  }

  .rlabel {
    margin-left: 26px;
    white-space: nowrap;
  }

  .result {
    width: 500px;
    height: 21px;
    margin-left: 6px;
    background: #f9f0e7;
    border: 1px solid #ececec;
    box-sizing: border-box;
  }

  .actions {
    display: flex;
    gap: 6px;
    margin-top: 7px;
  }

  .actions button {
    width: 140px;
    height: 25px;
    border: 1px solid #c4c4c4;
    background: #f0f0f0;
  }

  .actions .a1 {
    width: 139px;
  }

  .rules {
    position: relative;
    box-sizing: border-box;
    width: 728px;
    height: 277px;
    margin-top: 25px;
    margin-left: 1px;
    overflow: hidden;
    border: 1px solid #c8c8c8;
    background: #f0f0f0;
  }

  .rhead,
  .rrow {
    display: grid;
    grid-template-columns: 14px 101px 286px 312px;
    width: 713px;
    box-sizing: border-box;
    height: 21px;
    border-bottom: 1px solid #d4d4d4;
    line-height: 20px;
  }

  .rhead {
    height: 20px;
    border-bottom-color: #bdbdbd;
  }

  .rc {
    box-sizing: border-box;
    padding-left: 3px;
    border-right: 1px solid #d4d4d4;
    white-space: pre;
    overflow: hidden;
  }

  .center {
    padding-left: 0;
    color: #444;
    text-align: center;
  }

  .idx {
    padding-left: 0;
    text-align: center;
    letter-spacing: -0.5px;
    background: #f0f0f0;
    color: #444;
  }

  .tint {
    background: #f9f0e7;
  }

  .rel {
    padding-left: 4px;
    background: #fff;
  }

  .rscroll {
    position: absolute;
    top: 89px;
    right: 3px;
    width: 7px;
    height: 99px;
    border-radius: 4px;
    background: #c9c9c9;
  }

  .grip {
    position: absolute;
    right: 2px;
    bottom: 3px;
  }

  .ring {
    position: absolute;
    top: 710px;
    left: 100px;
  }
</style>
